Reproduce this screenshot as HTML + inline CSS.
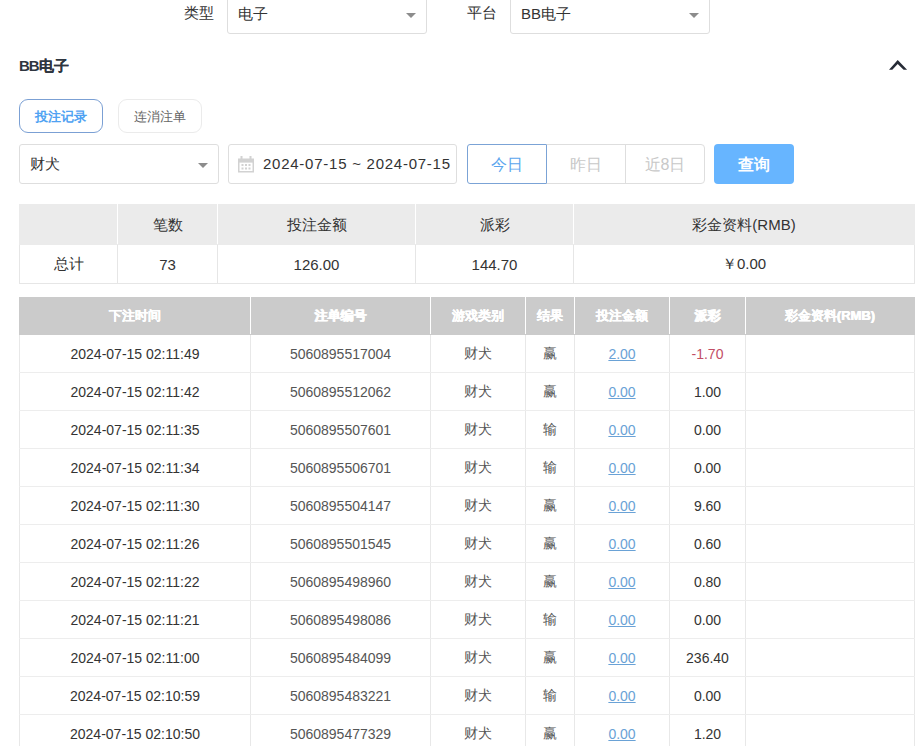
<!DOCTYPE html>
<html><head><meta charset="utf-8">
<style>
*{box-sizing:border-box;margin:0;padding:0}
html,body{width:922px;height:746px;overflow:hidden;background:#fff}
body{font-family:"Liberation Sans",sans-serif;color:#333;position:relative}
.abs{position:absolute}
.lbl{font-size:15px;color:#333;line-height:20px}
.sel{border:1px solid #dedede;border-radius:3px;background:#fff;height:40px;width:200px}
.sel .t{position:absolute;left:10px;top:0;line-height:38px;font-size:15px;color:#333}
.tri{position:absolute;width:0;height:0;border-left:5px solid transparent;border-right:5px solid transparent;border-top:5px solid #8c8c8c}
.h{font-size:15px;font-weight:bold;color:#2f3640}
.tab{height:34px;border-radius:9px;font-size:13px;line-height:34px;text-align:center}
.btn{height:40px;width:80px;font-size:16px;line-height:40px;text-align:center}
table{border-collapse:collapse;table-layout:fixed}
.sum td{height:40px;text-align:center;font-size:15px;color:#333;border:1px solid #e6e6e6}
.sum tr.hd td{background:#ebebeb;border-color:#ebebeb #fff #ebebeb #fff}
.sum tr.hd td:first-child{border-left-color:#ebebeb}.sum tr.hd td:last-child{border-right-color:#ebebeb}
.sum tr.hd td{padding-top:2px}
.sum tr.bd td{height:39px}
.main tr.hd td{height:37px}
.main td{height:38px;text-align:center;font-size:14px;color:#333;border:1px solid #e8e8e8;border-top-color:#ededed;border-bottom-color:#ededed}
.main tr.hd td{background:#cbcbcb;color:#fff;font-weight:bold;font-size:13px;text-shadow:0.3px 0 0 #fff,-0.3px 0 0 #fff;border-color:#cbcbcb #fff #cbcbcb #fff}
.main tr.hd td:first-child{border-left-color:#cbcbcb}.main tr.hd td:last-child{border-right-color:#cbcbcb}
.main td.g{color:#555}
.main a{color:#6aa2d6;text-decoration:underline}
.red{color:#c24e66 !important}
</style></head><body>

<div class="abs lbl" style="left:184px;top:3px">类型</div>
<div class="abs sel" style="left:227px;top:-6px"><span class="t">电子</span><span class="tri" style="left:178px;top:18px"></span></div>
<div class="abs lbl" style="left:467px;top:3px">平台</div>
<div class="abs sel" style="left:510px;top:-6px"><span class="t">BB电子</span><span class="tri" style="left:178px;top:18px"></span></div>

<div class="abs h" style="left:19px;top:57px"><span style="letter-spacing:-1px">BB</span><span style="text-shadow:0.35px 0 0 #2f3640">电子</span></div>
<svg class="abs" style="left:880px;top:50px" width="40" height="30" viewBox="0 0 40 30"><path d="M9 19.7 L17.7 10.1 L27.1 19.7 L23.6 19.7 L17.7 13.9 L12.3 19.7 Z" fill="#262b36"/></svg>

<div class="abs tab" style="left:19px;top:99px;width:84px;border:1px solid #7ba0d4;color:#4fa2f2;font-weight:bold">投注记录</div>
<div class="abs tab" style="left:118px;top:99px;width:84px;border:1px solid #ebebeb;color:#666">连消注单</div>

<div class="abs sel" style="left:19px;top:144px;width:200px"><span class="t" style="left:10px">财犬</span><span class="tri" style="left:178px;top:18px"></span></div>
<div class="abs sel" style="left:228px;top:144px;width:229px">
  <svg class="abs" style="left:7.5px;top:10px" width="18" height="18" viewBox="0 0 18 18">
    <rect x="3.5" y="1" width="2" height="4" fill="#d2d2d2"/><rect x="12.5" y="1" width="2" height="4" fill="#d2d2d2"/>
    <rect x="1" y="3.5" width="16" height="4" fill="#d2d2d2"/>
    <rect x="1.75" y="6.5" width="14.5" height="10.25" fill="none" stroke="#d2d2d2" stroke-width="1.5"/>
    <rect x="4.5" y="9" width="2" height="2" fill="#d2d2d2"/><rect x="8" y="9" width="2" height="2" fill="#d2d2d2"/><rect x="11.5" y="9" width="2" height="2" fill="#d2d2d2"/>
    <rect x="4.5" y="12.5" width="2" height="2" fill="#d2d2d2"/><rect x="8" y="12.5" width="2" height="2" fill="#d2d2d2"/><rect x="11.5" y="12.5" width="2" height="2" fill="#d2d2d2"/>
  </svg>
  <span class="t" style="left:34px;letter-spacing:0.75px">2024-07-15 ~ 2024-07-15</span>
</div>

<div class="abs btn" style="left:467px;top:144px;border:1px solid #7ba3d6;border-radius:3px 0 0 3px;color:#5aa6ee">今日</div>
<div class="abs btn" style="left:546px;top:144px;width:80px;border:1px solid #dedede;border-left:1px solid #7ba3d6;color:#c8c8c8">昨日</div>
<div class="abs btn" style="left:625px;top:144px;border:1px solid #dedede;border-radius:0 4px 4px 0;color:#c8c8c8">近8日</div>
<div class="abs btn" style="left:714px;top:144px;background:#67b5ff;border-radius:4px;color:#fff;font-weight:bold;line-height:41px">查询</div>

<table class="abs sum" style="left:19px;top:204px;width:896px">
<colgroup><col style="width:98px"><col style="width:100px"><col style="width:198px"><col style="width:158px"><col></colgroup>
<tr class="hd"><td></td><td>笔数</td><td>投注金额</td><td>派彩</td><td>彩金资料(RMB)</td></tr>
<tr class="bd"><td>总计</td><td>73</td><td>126.00</td><td>144.70</td><td>￥0.00</td></tr>
</table>

<table class="abs main" style="left:19px;top:297px;width:896px">
<colgroup><col style="width:231px"><col style="width:180px"><col style="width:95px"><col style="width:49px"><col style="width:95px"><col style="width:76px"><col></colgroup>
<tr class="hd"><td>下注时间</td><td>注单编号</td><td>游戏类别</td><td>结果</td><td>投注金额</td><td>派彩</td><td>彩金资料(RMB)</td></tr>
<tr><td>2024-07-15 02:11:49</td><td class="g">5060895517004</td><td class="g">财犬</td><td class="g">赢</td><td><a>2.00</a></td><td class="red">-1.70</td><td></td></tr>
<tr><td>2024-07-15 02:11:42</td><td class="g">5060895512062</td><td class="g">财犬</td><td class="g">赢</td><td><a>0.00</a></td><td>1.00</td><td></td></tr>
<tr><td>2024-07-15 02:11:35</td><td class="g">5060895507601</td><td class="g">财犬</td><td class="g">输</td><td><a>0.00</a></td><td>0.00</td><td></td></tr>
<tr><td>2024-07-15 02:11:34</td><td class="g">5060895506701</td><td class="g">财犬</td><td class="g">输</td><td><a>0.00</a></td><td>0.00</td><td></td></tr>
<tr><td>2024-07-15 02:11:30</td><td class="g">5060895504147</td><td class="g">财犬</td><td class="g">赢</td><td><a>0.00</a></td><td>9.60</td><td></td></tr>
<tr><td>2024-07-15 02:11:26</td><td class="g">5060895501545</td><td class="g">财犬</td><td class="g">赢</td><td><a>0.00</a></td><td>0.60</td><td></td></tr>
<tr><td>2024-07-15 02:11:22</td><td class="g">5060895498960</td><td class="g">财犬</td><td class="g">赢</td><td><a>0.00</a></td><td>0.80</td><td></td></tr>
<tr><td>2024-07-15 02:11:21</td><td class="g">5060895498086</td><td class="g">财犬</td><td class="g">输</td><td><a>0.00</a></td><td>0.00</td><td></td></tr>
<tr><td>2024-07-15 02:11:00</td><td class="g">5060895484099</td><td class="g">财犬</td><td class="g">赢</td><td><a>0.00</a></td><td>236.40</td><td></td></tr>
<tr><td>2024-07-15 02:10:59</td><td class="g">5060895483221</td><td class="g">财犬</td><td class="g">输</td><td><a>0.00</a></td><td>0.00</td><td></td></tr>
<tr><td>2024-07-15 02:10:50</td><td class="g">5060895477329</td><td class="g">财犬</td><td class="g">赢</td><td><a>0.00</a></td><td>1.20</td><td></td></tr>
</table>

</body></html>
